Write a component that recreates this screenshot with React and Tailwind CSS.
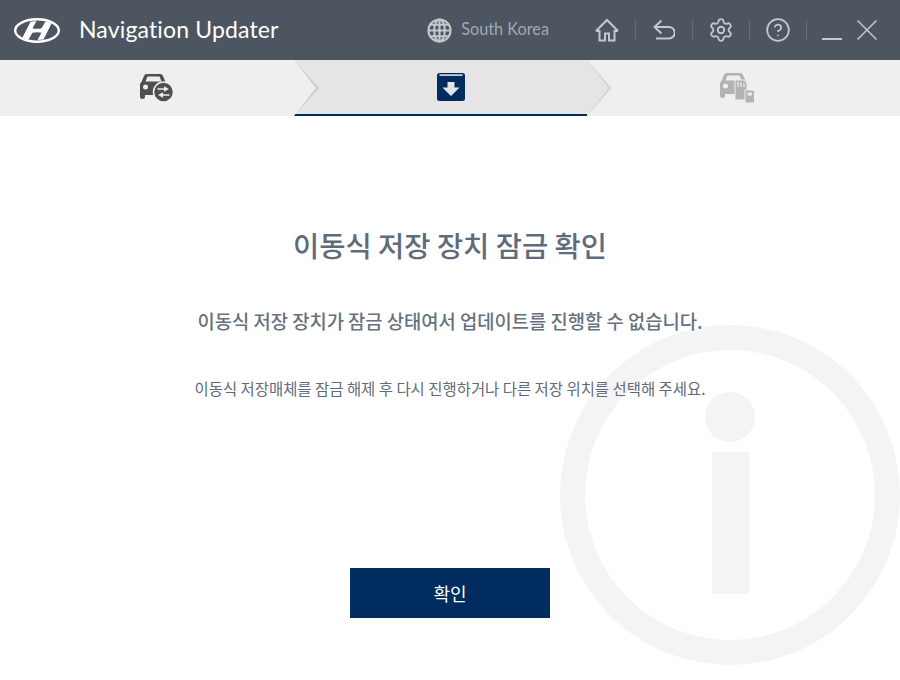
import { Settings, CircleHelp } from 'lucide-react'

const KR = { fontFamily: '"Noto Sans CJK KR", "Noto Sans", sans-serif' }
const LATIN = { fontFamily: 'Lato, "Noto Sans", sans-serif' }

function HyundaiLogo() {
  return (
    <svg width="46" height="25" viewBox="0 0 46 25" fill="#fff" aria-hidden="true">
      <ellipse cx="23" cy="12.500" rx="21.800" ry="11.200" fill="none" stroke="#fff" strokeWidth="2.400" />
      <path d="M16.500 3.700 22.500 2.900 18.500 10.300C21 11 24.500 11 27.500 10.300L31.500 3.500C34 3.900 35.500 4.500 37.500 5.500L29.500 21.500 23.500 22.100 27.500 14.700C25 14 21.500 14 18.500 14.700L14.500 21.500C12 21.100 10.500 20.500 8.500 19.500Z" />
    </svg>
  )
}

function Globe() {
  return (
    <svg width="25" height="25" viewBox="0 0 26 26" fill="none" stroke="#c3c8cd" strokeWidth="2.200" aria-hidden="true">
      <circle cx="13" cy="13" r="11.500" />
      <ellipse cx="13" cy="13" rx="5.500" ry="11.500" />
      <path d="M13 1.500v23M1.500 13h23M3.500 7h19M3.500 19h19" />
    </svg>
  )
}

function HomeIcon() {
  return (
    <svg width="24" height="24" viewBox="0 0 24 24" fill="none" stroke="#c3c8cd" strokeWidth="2" aria-hidden="true">
      <path d="M1 13 12 2l11 11" />
      <path d="M1 13h3.500v9.500h5.500v-7h4v7h5.500V13H23" />
    </svg>
  )
}

function BackIcon() {
  return (
    <svg width="22" height="22" viewBox="0 0 22 22" fill="none" stroke="#c3c8cd" strokeWidth="2" aria-hidden="true">
      <path d="M8.500 1.500 1.500 8l7 6.500" />
      <path d="M1.500 8h14.500a4.500 4.500 0 0 1 0 11.500H3" />
    </svg>
  )
}

function CloseIcon() {
  return (
    <svg width="20" height="20" viewBox="0 0 20 20" fill="none" stroke="#c3c8cd" strokeWidth="1.500" aria-hidden="true">
      <path d="M0.500 0.500 19.500 19.500M19.500 0.500 0.500 19.500" />
    </svg>
  )
}

function Sep() {
  return <div className="h-5 w-px bg-[#656c76]" />
}

function ToolCell({ children }) {
  return <div className="flex w-14 justify-center">{children}</div>
}

// the soft shade is a few wider copies of the arrow under the filled one
function ChevronEdge({ className, fill }) {
  return (
    <svg className={`absolute top-0 ${className}`} width="28" height="56" viewBox="0 0 28 56" aria-hidden="true">
      <path d="M0 0 27 28 0 56Z" fill="#000" fillOpacity="0.015" />
      <path d="M0 0 25.500 28 0 56Z" fill="#000" fillOpacity="0.025" />
      <path d="M0 0 24 28 0 56Z" fill="#000" fillOpacity="0.05" />
      <path d="M0 0 23 28 0 56Z" fill="#000" fillOpacity="0.07" />
      <path d="M0 0 22 28 0 56Z" fill={fill} />
    </svg>
  )
}

function CarSwapIcon() {
  return (
    <svg width="36" height="30" viewBox="0 0 36 30" aria-hidden="true">
      <path d="M8 1h13c1.500 0 2.400.7 3 2l2.500 6c1 .6 1.500 1.500 1.500 3V20a2 2 0 0 1-2 2H6v1.500a2.500 2.500 0 0 1-5 0V12c0-1.500.6-2.400 1.500-3L5 3c.6-1.300 1.500-2 3-2Zm.5 2.500L6.500 8.500h16l-2-5Z" fill="#4f4f52" fillRule="evenodd" />
      <circle cx="6.500" cy="14" r="2.500" fill="#eee" />
      <circle cx="24.500" cy="19" r="10" fill="#4f4f52" stroke="#eee" strokeWidth="1.500" />
      <path d="M18.500 16h7M30.500 22h-7" stroke="#eee" strokeWidth="1.600" fill="none" />
      <path d="M25 13.200 30 16 25 18.800ZM24 19.200 19 22 24 24.800Z" fill="#eee" />
    </svg>
  )
}

function ArchiveIcon() {
  return (
    <svg width="28" height="28" viewBox="0 0 28 28" aria-hidden="true">
      <rect width="28" height="28" rx="2.500" fill="#002c5f" />
      <rect x="2.500" y="1.200" width="23" height="1.800" fill="#c4ccd6" />
      <path d="M10.500 9h7v5.500H22.500L14 23 5.500 14.500H10.500Z" fill="#e5e5e5" />
    </svg>
  )
}

function CarCardIcon() {
  return (
    <svg width="36" height="32" viewBox="0 0 36 32" aria-hidden="true">
      <path d="M8 1h13c1.500 0 2.400.7 3 2l2.500 6c1 .6 1.500 1.500 1.500 3V20a2 2 0 0 1-2 2H6v1.500a2.500 2.500 0 0 1-5 0V12c0-1.500.6-2.400 1.500-3L5 3c.6-1.300 1.500-2 3-2Zm.5 2.500L6.500 8.500h16l-2-5Z" fill="#b3b3b3" fillRule="evenodd" />
      <circle cx="6.500" cy="14" r="2.500" fill="#eee" />
      <path d="M16 8h9l3 3v17H16Z" fill="#b3b3b3" stroke="#eee" strokeWidth="1" />
      <path d="M19 10v5M22 10v5M25 11v4" stroke="#eee" strokeWidth="1.300" />
      <path d="M26 18h8l1.500 1.500V31H26Z" fill="#b3b3b3" stroke="#eee" strokeWidth="1" />
      <path d="M28.500 20.500h4.500v3h-4.500Z" fill="#eee" />
    </svg>
  )
}

function InfoWatermark() {
  return (
    <svg className="absolute left-[560px] top-[209px]" width="340" height="340" viewBox="0 0 340 340" aria-hidden="true">
      <circle cx="170" cy="170" r="157.500" fill="none" stroke="#f4f4f4" strokeWidth="25" />
      <circle cx="170" cy="92" r="25" fill="#f4f4f4" />
      <rect x="152" y="127" width="37" height="142" fill="#f4f4f4" />
    </svg>
  )
}

export default function App() {
  return (
    <div className="flex h-[680px] w-[900px] flex-col overflow-hidden bg-white" style={KR}>
      <header className="flex h-[60px] shrink-0 items-center bg-[#4d5560] pl-[14px] pr-[23px]">
        <HyundaiLogo />
        <h1 className="ml-[19px] pb-[2px] text-[23px] leading-none tracking-[0.15px] text-white" style={LATIN}>Navigation Updater</h1>
        <div className="ml-auto flex items-center">
          <Globe />
          <span className="ml-[9px] mr-[30px] pb-[1px] text-[16.3px] text-[#9fa9b5]" style={LATIN}>South Korea</span>
          <ToolCell><HomeIcon /></ToolCell>
          <Sep />
          <ToolCell><BackIcon /></ToolCell>
          <Sep />
          <ToolCell><Settings size={26} strokeWidth={1.7} className="text-[#c3c8cd]" /></ToolCell>
          <Sep />
          <ToolCell><CircleHelp size={26} strokeWidth={1.6} className="text-[#c3c8cd]" /></ToolCell>
          <Sep />
          <div className="ml-[15px] mt-[18px] h-[2px] w-5 bg-[#c3c8cd]" />
          <div className="ml-[15px]"><CloseIcon /></div>
        </div>
      </header>

      <nav className="relative flex h-14 shrink-0 bg-[#efefef]">
        <div className="flex w-[294px] items-center justify-center pl-[19px]"><CarSwapIcon /></div>
        <div className="flex w-[293px] items-center justify-center border-b-2 border-[#002c5f] bg-[#e5e5e5] pb-[1px] pl-[21px]"><ArchiveIcon /></div>
        <div className="flex flex-1 items-center justify-center pr-[14px]"><CarCardIcon /></div>
        <ChevronEdge className="left-[294px]" fill="#efefef" />
        <ChevronEdge className="left-[587px]" fill="#e5e5e5" />
      </nav>

      <main className="relative flex flex-1 flex-col items-center text-[#5f6b7a]">
        <InfoWatermark />
        <h2 className="relative mt-[109px] text-[28.5px] font-medium leading-10">이동식 저장 장치 잠금 확인</h2>
        <p className="relative mt-[42px] text-[18.75px] font-medium leading-7 text-[#66717f]">이동식 저장 장치가 잠금 상태여서 업데이트를 진행할 수 없습니다.</p>
        <p className="relative mt-[41px] text-[15.45px] leading-6">이동식 저장매체를 잠금 해제 후 다시 진행하거나 다른 저장 위치를 선택해 주세요.</p>
        <button className="relative mt-[168px] h-[50px] w-[200px] bg-[#002c5f] text-[18px] text-white">확인</button>
      </main>
    </div>
  )
}
